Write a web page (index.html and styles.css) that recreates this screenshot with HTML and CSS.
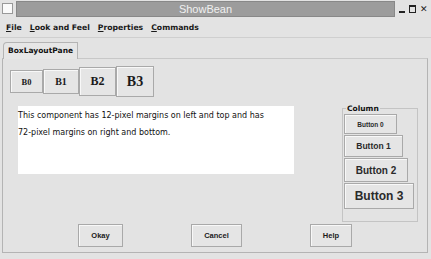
FILE: index.html
```html
<!doctype html>
<html lang="en">
<head>
    <meta charset="UTF-8">
    <title>ShowBean</title>
    <link rel="stylesheet" href="styles.css">
</head>
<body>
    <div class="window">
        <div class="titlebar">
            <div class="win-icon"></div>
            <div class="title">ShowBean</div>
            <div class="controls">
                <span class="min"></span>
                <span class="max"></span>
                <span class="close">&#x2715;</span>
            </div>
        </div>

        <div class="menubar">
            <span class="menu"><u>F</u>ile</span>
            <span class="menu"><u>L</u>ook and Feel</span>
            <span class="menu"><u>P</u>roperties</span>
            <span class="menu"><u>C</u>ommands</span>
        </div>

        <div class="tabs">
            <div class="tab">BoxLayoutPane</div>
        </div>

        <div class="panel">
            <div class="b-row">
                <button class="b b0">B0</button>
                <button class="b b1">B1</button>
                <button class="b b2">B2</button>
                <button class="b b3">B3</button>
            </div>

            <div class="middle">
                <div class="text-area">
                    <p>This component has 12-pixel margins on left and top and has</p>
                    <p>72-pixel margins on right and bottom.</p>
                </div>
                <fieldset class="column">
                    <legend>Column</legend>
                    <button class="c c0">Button 0</button>
                    <button class="c c1">Button 1</button>
                    <button class="c c2">Button 2</button>
                    <button class="c c3">Button 3</button>
                </fieldset>
            </div>

            <div class="actions">
                <button class="act okay">Okay</button>
                <button class="act cancel">Cancel</button>
                <button class="act help">Help</button>
            </div>
        </div>
    </div>
</body>
</html>
```

FILE: styles.css
```css
body {
    margin: 0;
    background: #e3e3e3;
    font-family: "DejaVu Sans", sans-serif;
    color: #111;
}
.window {
    width: 431px;
    height: 259px;
    overflow: hidden;
}

/* title bar */
.titlebar {
    display: flex;
    align-items: center;
    height: 17px;
}
.win-icon {
    width: 9px;
    height: 9px;
    margin: 0 3px 0 2px;
    background: #fafafa;
    border: 1px solid #999;
}
.title {
    flex: 1;
    height: 14px;
    line-height: 14px;
    background: #9c9c9c;
    border: 1px solid #888;
    color: #f0f0f0;
    font-family: "Liberation Sans", sans-serif;
    font-size: 11px;
    text-align: center;
}
.controls {
    display: flex;
    align-items: center;
    gap: 4px;
    width: 36px;
    padding-left: 4px;
    box-sizing: border-box;
}
.min {
    width: 6px;
    height: 2px;
    margin-top: 6px;
    background: #222;
}
.max {
    width: 5px;
    height: 5px;
    border: 1px solid #222;
    border-top-width: 2px;
}
.close {
    font-size: 9px;
    font-weight: bold;
    color: #222;
}

/* menu bar */
.menubar {
    display: flex;
    align-items: center;
    height: 20px;
    padding-left: 6px;
    gap: 8px;
    border-bottom: 1px solid #cfcfcf;
    font-size: 7.7px;
    font-weight: bold;
    color: #1a1a1a;
}
.menu u {
    text-decoration-thickness: 1px;
}

/* tab */
.tabs {
    display: flex;
    padding: 3px 0 0 3px;
    height: 17px;
}
.tab {
    position: relative;
    top: 1px;
    padding: 0 4px;
    height: 16px;
    line-height: 16px;
    border: 1px solid #b4b4b4;
    border-bottom: none;
    border-radius: 4px 0 0 0;
    background: #e6e6e6;
    font-size: 7.5px;
    font-weight: bold;
}

.panel {
    margin: 0 3px 0 2px;
    height: 195px;
    padding: 7px 0 0 7px;
    border: 1px solid #b4b4b4;
    border-top-color: #c8c8c8;
    box-sizing: border-box;
}

/* buttons common */
button {
    background: #e5e5e5;
    border: 1px solid #a9a9a9;
    box-shadow: inset 1px 1px 0 #f8f8f8;
    padding: 0;
    color: #1a1a1a;
    font-weight: bold;
}

.b-row {
    display: flex;
    align-items: center;
    height: 31px;
}
.b {
    font-family: "Liberation Serif", serif;
}
.b0 { width: 33px; height: 23px; font-size: 8.5px; }
.b1 { width: 36px; height: 25px; font-size: 10px; }
.b2 { width: 37px; height: 29px; font-size: 12px; }
.b3 { width: 38px; height: 31px; font-size: 14px; }

.middle {
    display: flex;
    align-items: flex-start;
    height: 126px;
}
.text-area {
    width: 276px;
    height: 68px;
    margin: 9px 0 0 8px;
    background: #fff;
    font-size: 8px;
    padding-top: 1px;
    box-sizing: border-box;
}
.text-area p {
    margin: 0;
    line-height: 17px;
}

.column {
    display: flex;
    flex-direction: column;
    align-items: flex-start;
    gap: 1px;
    width: 76px;
    height: 118px;
    margin: 7px 0 0 48px;
    padding: 1px 1px 0 1px;
    border: 1px solid #c4c4c4;
    box-sizing: border-box;
}
.column legend {
    padding: 0 1px;
    margin-left: 2px;
    font-size: 7.5px;
    font-weight: bold;
}
.c { color: #2a2a2a; }
.c0 { width: 53px; height: 20px; font-size: 6.5px; }
.c1 { width: 59px; height: 22px; font-size: 8.5px; }
.c2 { width: 64px; height: 24px; font-size: 10px; }
.c3 { width: 70px; height: 26px; font-size: 12px; }

.actions {
    display: flex;
    justify-content: center;
    gap: 68px;
    margin: 1px 7px 0 0;
}
.act {
    height: 23px;
    font-size: 7.5px;
}
.okay { width: 45px; }
.cancel { width: 51px; }
.help { width: 42px; }
```
